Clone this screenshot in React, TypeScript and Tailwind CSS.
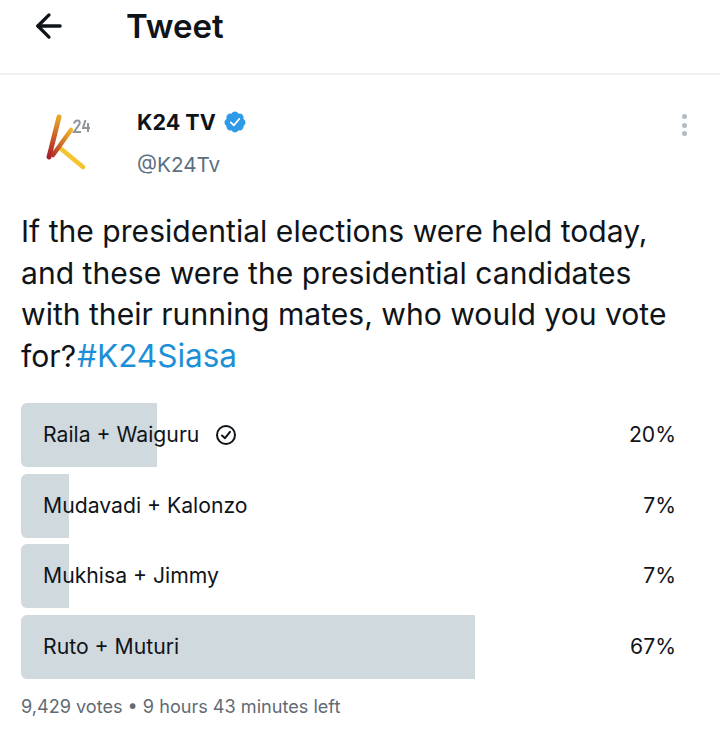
import { ArrowLeft } from 'lucide-react'

const options = [
  { label: 'Raila + Waiguru', pct: '20%', barWidth: 136, voted: true },
  { label: 'Mudavadi + Kalonzo', pct: '7%', barWidth: 48 },
  { label: 'Mukhisa + Jimmy', pct: '7%', barWidth: 48 },
  { label: 'Ruto + Muturi', pct: '67%', barWidth: 454 },
]

function K24Logo() {
  return (
    <svg width="52" height="64" viewBox="0 0 52 64" fill="none">
      <defs>
        <linearGradient id="kStem" x1="0.5" y1="0" x2="0.5" y2="1">
          <stop offset="0" stopColor="#e9a829" />
          <stop offset="0.55" stopColor="#c8552a" />
          <stop offset="1" stopColor="#a81f2b" />
        </linearGradient>
        <linearGradient id="kArm" x1="1" y1="0" x2="0" y2="1">
          <stop offset="0" stopColor="#f0b429" />
          <stop offset="1" stopColor="#b3362a" />
        </linearGradient>
      </defs>
      <path d="M14 34 L37 53" stroke="#f3c42f" strokeWidth="4.5" strokeLinecap="round" />
      <path d="M13 3 L3 43" stroke="url(#kStem)" strokeWidth="5" strokeLinecap="round" />
      <path d="M25 16 L7 41" stroke="url(#kArm)" strokeWidth="4.5" strokeLinecap="round" />
      <path d="M28 9.5 q1 -3 3.5 -3 q3 0 2 3.5 L28 18 h7 M39.5 6 L37 14 h7 M42 9 v9" stroke="#8f959a" strokeWidth="2" />
    </svg>
  )
}

function VerifiedBadge() {
  return (
    <svg width="24" height="24" viewBox="0 0 24 24">
      <path
        fill="#2f9be6"
        d="M22.5 12.5c0-1.58-.875-2.95-2.148-3.6.154-.435.238-.905.238-1.4 0-2.21-1.71-3.998-3.818-3.998-.47 0-.92.084-1.336.25C14.818 2.415 13.51 1.5 12 1.5s-2.816.917-3.437 2.25c-.415-.165-.866-.25-1.336-.25-2.11 0-3.818 1.79-3.818 4 0 .494.083.964.237 1.4-1.272.65-2.147 2.018-2.147 3.6 0 1.495.782 2.798 1.942 3.486-.02.17-.032.34-.032.514 0 2.21 1.708 4 3.818 4 .47 0 .92-.086 1.335-.25.62 1.334 1.926 2.25 3.437 2.25 1.512 0 2.818-.916 3.437-2.25.415.163.865.248 1.336.248 2.11 0 3.818-1.79 3.818-4 0-.174-.012-.344-.033-.513 1.158-.687 1.943-1.99 1.943-3.484z"
      />
      <path d="M7.8 12.4 L10.8 15.3 L16.2 9" fill="none" stroke="#fff" strokeWidth="1.8" strokeLinecap="round" strokeLinejoin="round" />
    </svg>
  )
}

function VotedIcon() {
  return (
    <svg width="22" height="22" viewBox="0 0 22 22" fill="none" stroke="#0f1419" strokeWidth="2">
      <circle cx="11" cy="11" r="9" />
      <path d="M7 11.5 L10 14.2 L15 7.8" strokeLinecap="round" strokeLinejoin="round" />
    </svg>
  )
}

export default function App() {
  return (
    <div className="h-[749px] w-[720px] overflow-hidden bg-white text-[#0f1419]" style={{ fontFamily: 'Inter, "Liberation Sans", sans-serif' }}>
      <header className="flex h-[75px] items-start border-b-2 border-[#eff1f2] pl-[30px] pt-[7px]">
        <ArrowLeft size={38} strokeWidth={2.1} />
        <h1 className="ml-[58px] text-[33px] leading-[38px] font-semibold">Tweet</h1>
      </header>

      <main className="px-[21px]">
        <div className="flex items-start pt-[34px]">
          <div className="ml-[25px] mt-[5px] w-[91px] shrink-0">
            <K24Logo />
          </div>
          <div className="flex-1">
            <div className="flex items-center gap-[7px]">
              <span className="text-[21.5px] leading-[26px] font-bold">K24 TV</span>
              <VerifiedBadge />
            </div>
            <div className="mt-[17px] text-[20.7px] leading-[26px] text-[#5b7083]">@K24Tv</div>
          </div>
          <div className="mr-[12px] flex flex-col gap-[3.5px] pt-[5px]">
            <span className="h-[5px] w-[5px] rounded-full bg-[#b4bbc1]" />
            <span className="h-[5px] w-[5px] rounded-full bg-[#b4bbc1]" />
            <span className="h-[5px] w-[5px] rounded-full bg-[#b4bbc1]" />
          </div>
        </div>

        <p className="mt-[33px] text-[30.1px] leading-[41.5px] whitespace-nowrap">
          If the presidential elections were held today,
          <br />
          and these were the presidential candidates
          <br />
          with their running mates, who would you vote
          <br />
          for?<span className="ml-[1px] text-[31.5px] leading-none text-[#1d8fd6]">#K24Siasa</span>
        </p>

        <div className="mt-[26px] flex flex-col gap-[6.7px]">
          {options.map((o) => (
            <div key={o.label} className="grid h-[64px] w-[655px]">
              <div className="h-full rounded-l-[6px] bg-[#cfd9de] [grid-area:1/1]" style={{ width: o.barWidth }} />
              <div className="flex items-center justify-between pl-[22px] text-[21.2px] [grid-area:1/1]">
                <span className="flex items-center gap-[16px]">
                  {o.label}
                  {o.voted ? <VotedIcon /> : null}
                </span>
                <span>{o.pct}</span>
              </div>
            </div>
          ))}
        </div>

        <div className="mt-[14px] text-[18.1px] leading-[26px] text-[#5f6b75]">9,429 votes • 9 hours 43 minutes left</div>
      </main>
    </div>
  )
}
